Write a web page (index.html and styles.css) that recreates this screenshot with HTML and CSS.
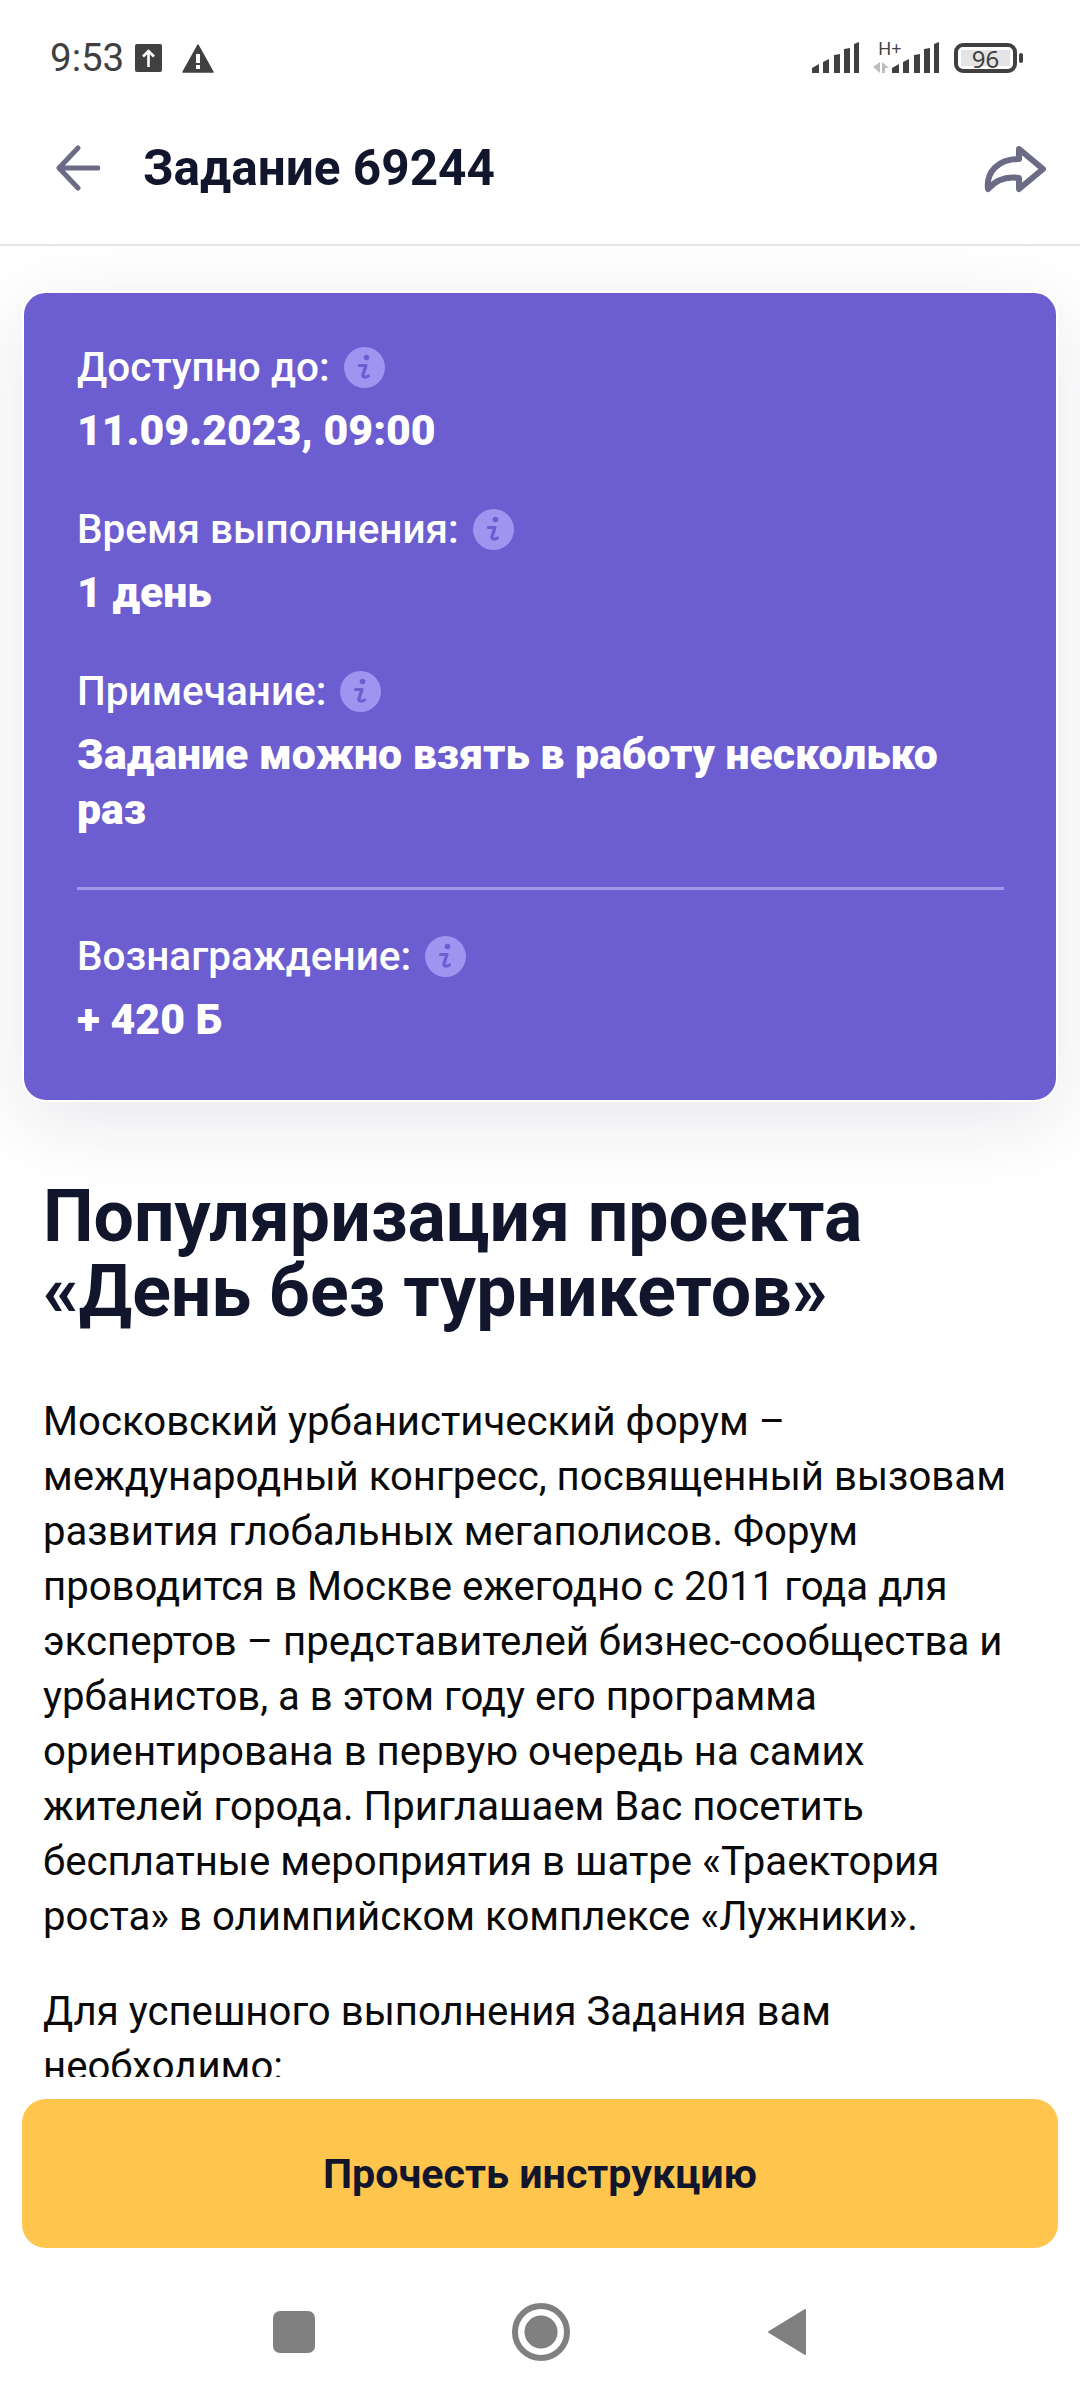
FILE: index.html
```html
<!DOCTYPE html>
<html lang="ru">
<head>
    <meta charset="UTF-8">
    <meta name="viewport" content="width=device-width, initial-scale=1.0">
    <title>Задание 69244</title>
    <link rel="stylesheet" href="styles.css">
</head>
<body>
    <svg class="sprites" width="0" height="0">
        <symbol id="hint" viewBox="0 0 41 41">
            <circle cx="20.500" cy="20.500" r="20.500" fill="#a094f0"/>
            <circle cx="22.500" cy="10.500" r="2.800" fill="#6c5dd0"/>
            <path d="M15.500 18.500h6.500L19 27.500c-.8 3 2.500 3.300 5.500 1.500" fill="none" stroke="#6c5dd0" stroke-width="3.200" stroke-linecap="round" stroke-linejoin="round"/>
        </symbol>
    </svg>

    <div class="status-bar">
        <div class="status-left">
            <span class="clock">9:53</span>
            <svg class="upload-icon" width="27" height="28" viewBox="0 0 27 28">
                <rect width="27" height="28" rx="2" fill="#404040"/>
                <path d="M13.500 23V7M8 12.500 13.500 7l5.500 5.500" fill="none" stroke="#fff" stroke-width="2.600"/>
            </svg>
            <svg class="warn-icon" width="32" height="29" viewBox="0 0 32 29">
                <path d="M16 1 31 28H1Z" fill="#404040" stroke="#404040" stroke-width="1.500" stroke-linejoin="round"/>
                <rect x="14" y="10" width="4" height="9" fill="#fff"/>
                <rect x="14" y="21" width="4" height="4" fill="#fff"/>
            </svg>
        </div>
        <div class="status-right">
            <svg width="48" height="31" viewBox="0 0 48 31" fill="#404040">
                <path d="M0 26 7 22V31H0ZM11 20 17 17V31H11ZM22 13 28 12V31H22ZM32 7 38 6V31H32ZM42 2 47 0V31H42Z"/>
            </svg>
            <div class="network">
                <span class="network-type">H+</span>
                <svg width="16" height="11" viewBox="0 0 16 11" fill="#bdbdbd">
                    <path d="M7 0V11L0 5ZM9 0 16 6H9ZM9 6H12V11H9Z"/>
                </svg>
            </div>
            <svg width="48" height="31" viewBox="0 0 48 31" fill="#404040">
                <path d="M0 26 7 22V31H0ZM11 20 17 17V31H11ZM22 13 28 12V31H22ZM32 7 38 6V31H32ZM42 2 47 0V31H42Z"/>
            </svg>
            <div class="battery"><span class="battery-level">96</span></div>
            <span class="battery-tip"></span>
        </div>
    </div>

    <header class="app-bar">
        <svg class="back-icon" width="44" height="46" viewBox="0 0 44 46">
            <path d="M42 23H4M22 3 3 23l19 20" fill="none" stroke="#6b6b85" stroke-width="5" stroke-linecap="round" stroke-linejoin="round"/>
        </svg>
        <h1>Задание 69244</h1>
        <svg class="share-icon" width="66" height="52" viewBox="0 0 66 52">
            <path d="M37 7 61 27 37 47V36C24 34 14 38 6 47 4 30 16 17 37 17Z" fill="none" stroke="#6b6b85" stroke-width="6" stroke-linejoin="round"/>
        </svg>
    </header>

    <main class="content">
        <section class="info-card">
            <div class="info-item">
                <div class="info-label">Доступно до: <svg class="hint" width="41" height="41"><use href="#hint"/></svg></div>
                <div class="info-value">11.09.2023, 09:00</div>
            </div>
            <div class="info-item">
                <div class="info-label">Время выполнения: <svg class="hint" width="41" height="41"><use href="#hint"/></svg></div>
                <div class="info-value">1 день</div>
            </div>
            <div class="info-item">
                <div class="info-label">Примечание: <svg class="hint" width="41" height="41"><use href="#hint"/></svg></div>
                <div class="info-value">Задание можно взять в работу несколько раз</div>
            </div>
            <hr class="divider">
            <div class="info-item">
                <div class="info-label">Вознаграждение: <svg class="hint" width="41" height="41"><use href="#hint"/></svg></div>
                <div class="info-value">+ 420 Б</div>
            </div>
        </section>

        <article class="task">
            <h2>Популяризация проекта «День без турникетов»</h2>
            <p>Московский урбанистический форум – международный конгресс, посвященный вызовам развития глобальных мегаполисов. Форум проводится в Москве ежегодно с 2011 года для экспертов – представителей бизнес-сообщества и урбанистов, а в этом году его программа ориентирована в первую очередь на самих жителей города. Приглашаем Вас посетить бесплатные мероприятия в шатре «Траектория роста» в олимпийском комплексе «Лужники».</p>
            <p>Для успешного выполнения Задания вам необходимо:</p>
        </article>
    </main>

    <div class="action">
        <button class="read-btn">Прочесть инструкцию</button>
    </div>

    <nav class="nav-bar">
        <span class="nav-square"></span>
        <span class="nav-circle"></span>
        <svg width="40" height="48" viewBox="0 0 40 48">
            <path d="M38 2V46L2 24Z" fill="#808080" stroke="#808080" stroke-width="2" stroke-linejoin="round"/>
        </svg>
    </nav>
</body>
</html>
```

FILE: styles.css
```css
* {
    box-sizing: border-box;
}
body {
    font-family: Roboto, "Noto Sans", sans-serif;
    margin: 0;
    width: 1080px;
    height: 2400px;
    display: flex;
    flex-direction: column;
    background-color: #fff;
    color: #111;
    overflow: hidden;
}
.sprites {
    display: none;
}
.status-bar {
    height: 92px;
    padding: 0 57px 0 50px;
    display: flex;
    justify-content: space-between;
    align-items: flex-start;
    color: #404040;
}
.status-left {
    display: flex;
    align-items: center;
    margin-top: 40px;
}
.clock {
    font-size: 38.5px;
    line-height: 36px;
    margin-right: 11px;
}
.warn-icon {
    margin-left: 20px;
}
.status-right {
    display: flex;
    align-items: flex-end;
    margin-top: 42px;
    height: 31px;
}
.network {
    width: 32px;
    position: relative;
    height: 31px;
}
.network-type {
    position: absolute;
    left: 18px;
    top: -3px;
    font-size: 18px;
    line-height: 18px;
    font-family: "Noto Sans", sans-serif;
}
.network svg {
    position: absolute;
    left: 13px;
    bottom: 0;
}
.battery {
    width: 63px;
    height: 30px;
    margin-left: 14px;
    border: 4px solid #404040;
    border-radius: 9px;
    padding: 3px;
    display: flex;
}
.battery-level {
    flex: 1;
    background-color: #e4e4e4;
    font-size: 24px;
    line-height: 18px;
    text-align: center;
    font-family: "Noto Sans", sans-serif;
}
.battery-tip {
    width: 4px;
    height: 10px;
    margin: 0 0 10px 2px;
    background-color: #404040;
    border-radius: 2px;
}
.app-bar {
    height: 154px;
    padding: 0 32px 0 56px;
    display: flex;
    align-items: center;
    border-bottom: 2px solid #e6e6e6;
}
.app-bar h1 {
    flex: 1;
    margin: 0 0 0 43px;
    font-size: 49.5px;
    font-weight: 700;
    color: #12162c;
}
.content {
    flex: 1;
    overflow: hidden;
    min-height: 0;
}
.info-card {
    margin: 45px 22px 0;
    padding: 47px 52px 53px 53px;
    background-color: #6c5dd0;
    border: 2px solid #fff;
    border-radius: 24px;
    color: #fff;
    box-shadow: 0 20px 80px rgba(30, 30, 70, 0.1);
}
.info-item {
    margin-bottom: 44px;
}
.info-item:last-child {
    margin-bottom: 0;
}
.info-label {
    font-size: 40.5px;
    font-weight: 500;
    line-height: 55px;
    display: flex;
    align-items: center;
    gap: 14px;
}
.info-value {
    font-size: 42.8px;
    line-height: 55px;
    font-weight: 900;
    margin-top: 8px;
}
.divider {
    border: none;
    height: 3px;
    margin: 50px 0 39px;
    background-color: #a398e6;
}
.task {
    padding: 0 48px 0 43px;
}
.task h2 {
    margin: 77px 0 0;
    font-size: 71.6px;
    line-height: 75px;
    font-weight: 700;
    color: #12162c;
}
.task p {
    margin: 65px 0 0;
    font-size: 40.15px;
    line-height: 55px;
    color: #0a0a0a;
}
.task p + p {
    margin-top: 40px;
}
.action {
    padding: 22px 22px 0;
}
.read-btn {
    display: block;
    width: 100%;
    height: 149px;
    background-color: #ffc54d;
    border: none;
    border-radius: 24px;
    font-family: Roboto, sans-serif;
    font-size: 41.2px;
    font-weight: 700;
    color: #12162c;
}
.nav-bar {
    height: 152px;
    padding-top: 15px;
    display: flex;
    align-items: center;
    justify-content: center;
    gap: 197px;
}
.nav-square {
    width: 42px;
    height: 42px;
    border-radius: 7px;
    background-color: #808080;
}
.nav-circle {
    width: 58px;
    height: 58px;
    border-radius: 50%;
    border: 6px solid #808080;
    background: radial-gradient(circle, #808080 0 16px, #fff 17px);
}
```
